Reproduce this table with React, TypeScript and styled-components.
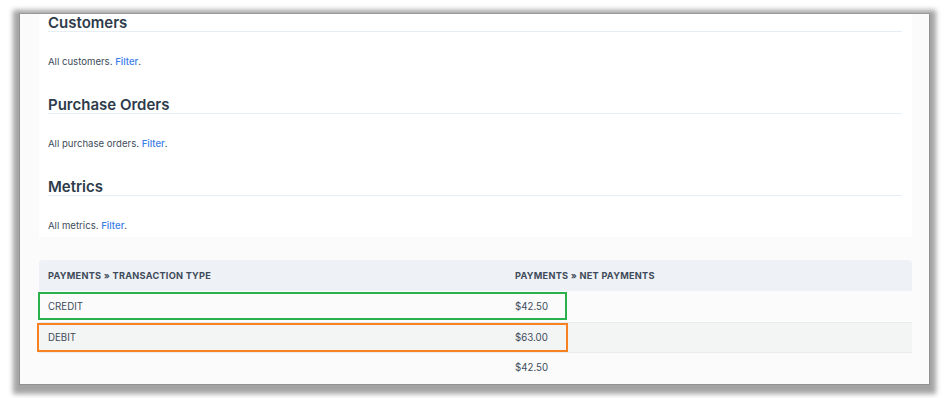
import styled, { createGlobalStyle } from "styled-components";

const GlobalStyle = createGlobalStyle`
  html, body {
    margin: 0;
    padding: 0;
    background: #ffffff;
  }
  body {
    font-family: Inter, "Noto Sans", sans-serif;
    -webkit-font-smoothing: antialiased;
  }
`;

const sections = [
  { title: "Customers", text: "All customers." },
  { title: "Purchase Orders", text: "All purchase orders." },
  { title: "Metrics", text: "All metrics." },
];

const rows = [
  { type: "CREDIT", amount: "$42.50" },
  { type: "DEBIT", amount: "$63.00" },
  { type: "", amount: "$42.50" },
];

function App() {
  return (
    <>
      <GlobalStyle />
      <Page>
        <Window>
          <Card>
            {sections.map((s, i) => (
              <Section key={s.title} $first={i === 0}>
                <Heading>{s.title}</Heading>
                <Description>
                  {s.text} <FilterLink href="#">Filter</FilterLink>.
                </Description>
              </Section>
            ))}
          </Card>

          <Table>
            <HeaderRow>
              <HeaderCell>Payments » Transaction Type</HeaderCell>
              <HeaderCell>Payments » Net Payments</HeaderCell>
            </HeaderRow>
            {rows.map((r, i) => (
              <Row key={i} $shaded={i === 1}>
                <Cell>{r.type}</Cell>
                <Cell>{r.amount}</Cell>
              </Row>
            ))}
            <Highlight $color="#2bb14b" $top={32} $left={-1} $width={529} $height={28} />
            <Highlight $color="#f7821f" $top={63} $left={-2} $width={531} $height={29} />
          </Table>
        </Window>
      </Page>
    </>
  );
}

export default App;

const Page = styled.div`
  width: 950px;
  height: 398px;
  padding: 14px 21px 14px 20px;
  box-sizing: border-box;
  overflow: hidden;
`;

const Window = styled.div`
  width: 909px;
  height: 370px;
  background: #fbfbfb;
  overflow: hidden;
  box-shadow: 0 0 0 1px rgba(0, 0, 0, 0.1), 0 3px 5px 7px rgba(0, 0, 0, 0.36);
`;

const Card = styled.div`
  margin-left: 19px;
  width: 873px;
  box-sizing: border-box;
  padding: 0 10px 5px 9px;
  background: #ffffff;
`;

const Section = styled.div<{ $first?: boolean }>`
  padding-top: ${(p) => (p.$first ? "0" : "28px")};
`;

const Heading = styled.h2`
  margin: 0;
  font-size: 15px;
  line-height: 16px;
  padding-top: 1px;
  font-weight: 600;
  color: #2d3b4b;
  border-bottom: 1px solid #e8eef5;
`;

const Description = styled.p`
  margin: 24px 0 0;
  font-size: 9.6px;
  line-height: 12px;
  color: #404c5b;
`;

const FilterLink = styled.a`
  color: #3b7de9;
  text-decoration: none;
  font-weight: 500;
`;

const Table = styled.div`
  position: relative;
  margin: 23px 0 0 19px;
  width: 873px;
`;

const HeaderRow = styled.div`
  display: grid;
  grid-template-columns: 467px 1fr;
  height: 31px;
  align-items: center;
  background: #eef2f7;
  border-radius: 4px 4px 0 0;
`;

const HeaderCell = styled.div`
  padding-left: 9px;
  font-size: 9.2px;
  letter-spacing: 0.25px;
  font-weight: 700;
  text-transform: uppercase;
  color: #3f4b5a;
`;

const Row = styled.div<{ $shaded?: boolean }>`
  display: grid;
  grid-template-columns: 467px 1fr;
  height: 30.5px;
  align-items: center;
  background: ${(p) => (p.$shaded ? "#f3f4f4" : "#fbfbfb")};
  border-top: 1px solid #e9ecee;
  box-sizing: border-box;
  &:nth-child(2) {
    border-top: none;
  }
`;

const Cell = styled.div`
  padding-left: 9px;
  font-size: 9.7px;
  color: #404c5b;
`;

const Highlight = styled.div<{
  $color: string;
  $top: number;
  $left: number;
  $width: number;
  $height: number;
}>`
  position: absolute;
  top: ${(p) => p.$top}px;
  left: ${(p) => p.$left}px;
  width: ${(p) => p.$width}px;
  height: ${(p) => p.$height}px;
  border: 2px solid ${(p) => p.$color};
  box-sizing: border-box;
  pointer-events: none;
`;
